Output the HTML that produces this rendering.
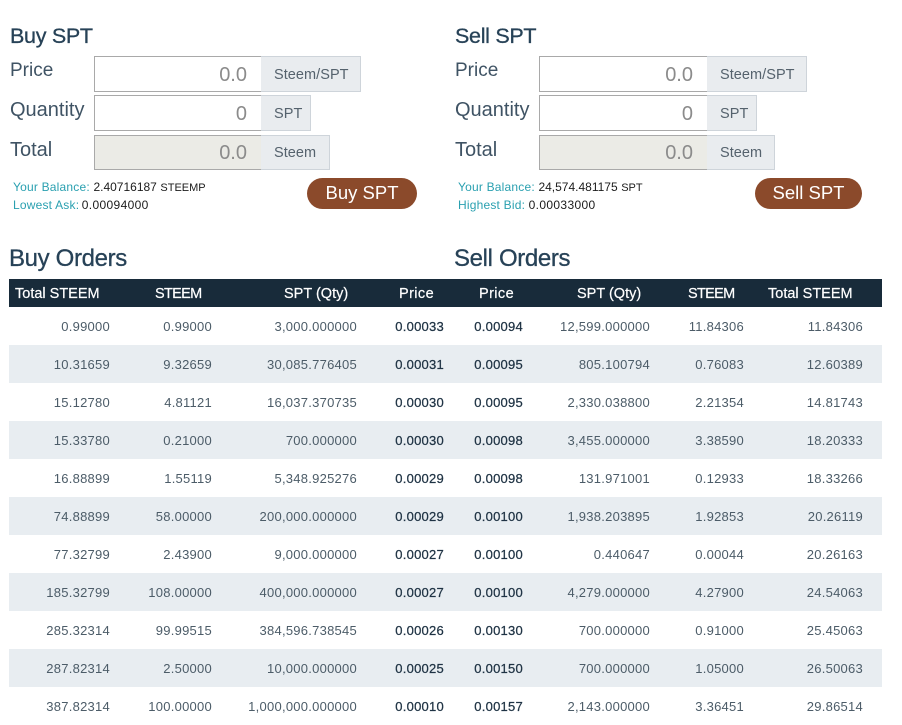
<!DOCTYPE html>
<html lang="en"><head><meta charset="utf-8"><title>SPT Market</title>
<style>
html,body{margin:0;padding:0;background:#fff;}
body{position:relative;width:902px;height:718px;overflow:hidden;font-family:"Liberation Sans",sans-serif;color:#4a5a66;}
.a{position:absolute;white-space:nowrap;}
.h{font-size:24px;line-height:30px;color:#274257;-webkit-text-stroke:.3px #274257;letter-spacing:-.35px;}
.h.m{font-size:21.5px;letter-spacing:-.3px;}
.l{font-size:20px;line-height:26px;color:#3f5364;}
.l.p{font-size:19px;}
.i{position:absolute;box-sizing:border-box;border:1px solid #a9a9a9;background:#fff;color:#8b8b8b;font-size:20px;text-align:right;padding-right:14px;}
.g{position:absolute;box-sizing:border-box;background:#e9ecef;border:1px solid #ced4da;border-left:0;color:#55626d;font-size:14.5px;padding-left:13px;letter-spacing:.05px;}
.s{font-size:12px;line-height:16px;color:#1b1b1b;letter-spacing:.2px;}
.s b{font-weight:normal;color:#2aa0b0;}
.s i{font-style:normal;font-size:11px;letter-spacing:0;}
.s u{text-decoration:none;letter-spacing:0;}
.s em{font-style:normal;letter-spacing:.35px;}
.b{position:absolute;background:#8b4a2b;color:#fff;border-radius:16px;text-align:center;font-size:18.5px;height:31px;line-height:30px;top:178px;}
.bar{position:absolute;left:9px;top:279px;width:873px;height:28px;background:#182b3a;}
.t{position:absolute;top:285px;font-size:14.5px;line-height:18px;color:#fff;white-space:nowrap;-webkit-text-stroke:.2px #fff;}
.t.n{letter-spacing:-.7px;}
.t.q{letter-spacing:.4px;}
.r{position:absolute;left:9px;width:873px;height:38px;}
.r.e{background:#e8edf1;}
.r span{position:absolute;top:12px;line-height:16px;font-size:13px;letter-spacing:.25px;color:#4c5c68;white-space:nowrap;text-align:right;width:140px;}
.r span:nth-child(1){left:-39px;}
.r span:nth-child(2){left:63px;}
.r span:nth-child(3){left:208px;}
.r span:nth-child(4){left:295px;color:#1f3344;-webkit-text-stroke:.25px #1f3344;}
.r span:nth-child(5){left:374px;color:#1f3344;-webkit-text-stroke:.25px #1f3344;}
.r span:nth-child(6){left:501px;}
.r span:nth-child(7){left:595px;}
.r span:nth-child(8){left:714px;}
</style></head><body>
<div class="a h m" style="left:10px;top:21px;">Buy SPT</div>
<div class="a l p" style="left:10px;top:58px;">Price</div>
<div class="i" style="left:94px;top:56px;width:168px;height:36px;line-height:36px;">0.0</div>
<div class="g" style="left:261px;top:56px;width:100px;height:36px;line-height:36px;">Steem/SPT</div>
<div class="a l" style="left:10px;top:97px;">Quantity</div>
<div class="i" style="left:94px;top:95px;width:168px;height:36px;line-height:36px;">0</div>
<div class="g" style="left:261px;top:95px;width:50px;height:36px;line-height:36px;">SPT</div>
<div class="a l" style="left:10px;top:137px;">Total</div>
<div class="i" style="left:94px;top:135px;width:168px;height:35px;line-height:34px;background:#ebebe6;">0.0</div>
<div class="g" style="left:261px;top:135px;width:69px;height:35px;line-height:35px;">Steem</div>
<div class="a s" style="left:13px;top:179px;"><b>Your Balance:</b> <u>2.40716187</u> <i>STEEMP</i></div>
<div class="a s" style="left:13px;top:197px;"><b>Lowest Ask:</b> <em style="margin-left:-1px">0.00094000</em></div>
<div class="b" style="left:307px;width:110px;">Buy SPT</div>

<div class="a h m" style="left:455px;top:21px;">Sell SPT</div>
<div class="a l p" style="left:455px;top:58px;">Price</div>
<div class="i" style="left:539px;top:56px;width:169px;height:36px;line-height:36px;">0.0</div>
<div class="g" style="left:707px;top:56px;width:100px;height:36px;line-height:36px;">Steem/SPT</div>
<div class="a l" style="left:455px;top:97px;">Quantity</div>
<div class="i" style="left:539px;top:95px;width:169px;height:36px;line-height:36px;">0</div>
<div class="g" style="left:707px;top:95px;width:50px;height:36px;line-height:36px;">SPT</div>
<div class="a l" style="left:455px;top:137px;">Total</div>
<div class="i" style="left:539px;top:135px;width:169px;height:35px;line-height:34px;background:#ebebe6;">0.0</div>
<div class="g" style="left:707px;top:135px;width:68px;height:35px;line-height:35px;">Steem</div>
<div class="a s" style="left:458px;top:179px;"><b>Your Balance:</b> <u>24,574.481175</u> <i>SPT</i></div>
<div class="a s" style="left:458px;top:197px;"><b>Highest Bid:</b> <em>0.00033000</em></div>
<div class="b" style="left:755px;width:107px;">Sell SPT</div>

<div class="a h" style="left:9px;top:244px;">Buy Orders</div>
<div class="a h" style="left:454px;top:244px;">Sell Orders</div>
<div class="bar"></div>
<div class="t" style="left:15px;">Total STEEM</div>
<div class="t n" style="left:155px;">STEEM</div>
<div class="t" style="left:284px;">SPT (Qty)</div>
<div class="t q" style="left:399px;">Price</div>
<div class="t q" style="left:479px;">Price</div>
<div class="t" style="left:577px;">SPT (Qty)</div>
<div class="t n" style="left:688px;">STEEM</div>
<div class="t" style="left:768px;">Total STEEM</div>

<div class="r" style="top:307px;"><span>0.99000</span><span>0.99000</span><span>3,000.000000</span><span>0.00033</span><span>0.00094</span><span>12,599.000000</span><span>11.84306</span><span>11.84306</span></div>
<div class="r e" style="top:345px;"><span>10.31659</span><span>9.32659</span><span>30,085.776405</span><span>0.00031</span><span>0.00095</span><span>805.100794</span><span>0.76083</span><span>12.60389</span></div>
<div class="r" style="top:383px;"><span>15.12780</span><span>4.81121</span><span>16,037.370735</span><span>0.00030</span><span>0.00095</span><span>2,330.038800</span><span>2.21354</span><span>14.81743</span></div>
<div class="r e" style="top:421px;"><span>15.33780</span><span>0.21000</span><span>700.000000</span><span>0.00030</span><span>0.00098</span><span>3,455.000000</span><span>3.38590</span><span>18.20333</span></div>
<div class="r" style="top:459px;"><span>16.88899</span><span>1.55119</span><span>5,348.925276</span><span>0.00029</span><span>0.00098</span><span>131.971001</span><span>0.12933</span><span>18.33266</span></div>
<div class="r e" style="top:497px;"><span>74.88899</span><span>58.00000</span><span>200,000.000000</span><span>0.00029</span><span>0.00100</span><span>1,938.203895</span><span>1.92853</span><span>20.26119</span></div>
<div class="r" style="top:535px;"><span>77.32799</span><span>2.43900</span><span>9,000.000000</span><span>0.00027</span><span>0.00100</span><span>0.440647</span><span>0.00044</span><span>20.26163</span></div>
<div class="r e" style="top:573px;"><span>185.32799</span><span>108.00000</span><span>400,000.000000</span><span>0.00027</span><span>0.00100</span><span>4,279.000000</span><span>4.27900</span><span>24.54063</span></div>
<div class="r" style="top:611px;"><span>285.32314</span><span>99.99515</span><span>384,596.738545</span><span>0.00026</span><span>0.00130</span><span>700.000000</span><span>0.91000</span><span>25.45063</span></div>
<div class="r e" style="top:649px;"><span>287.82314</span><span>2.50000</span><span>10,000.000000</span><span>0.00025</span><span>0.00150</span><span>700.000000</span><span>1.05000</span><span>26.50063</span></div>
<div class="r" style="top:687px;"><span>387.82314</span><span>100.00000</span><span>1,000,000.000000</span><span>0.00010</span><span>0.00157</span><span>2,143.000000</span><span>3.36451</span><span>29.86514</span></div>
</body></html>
